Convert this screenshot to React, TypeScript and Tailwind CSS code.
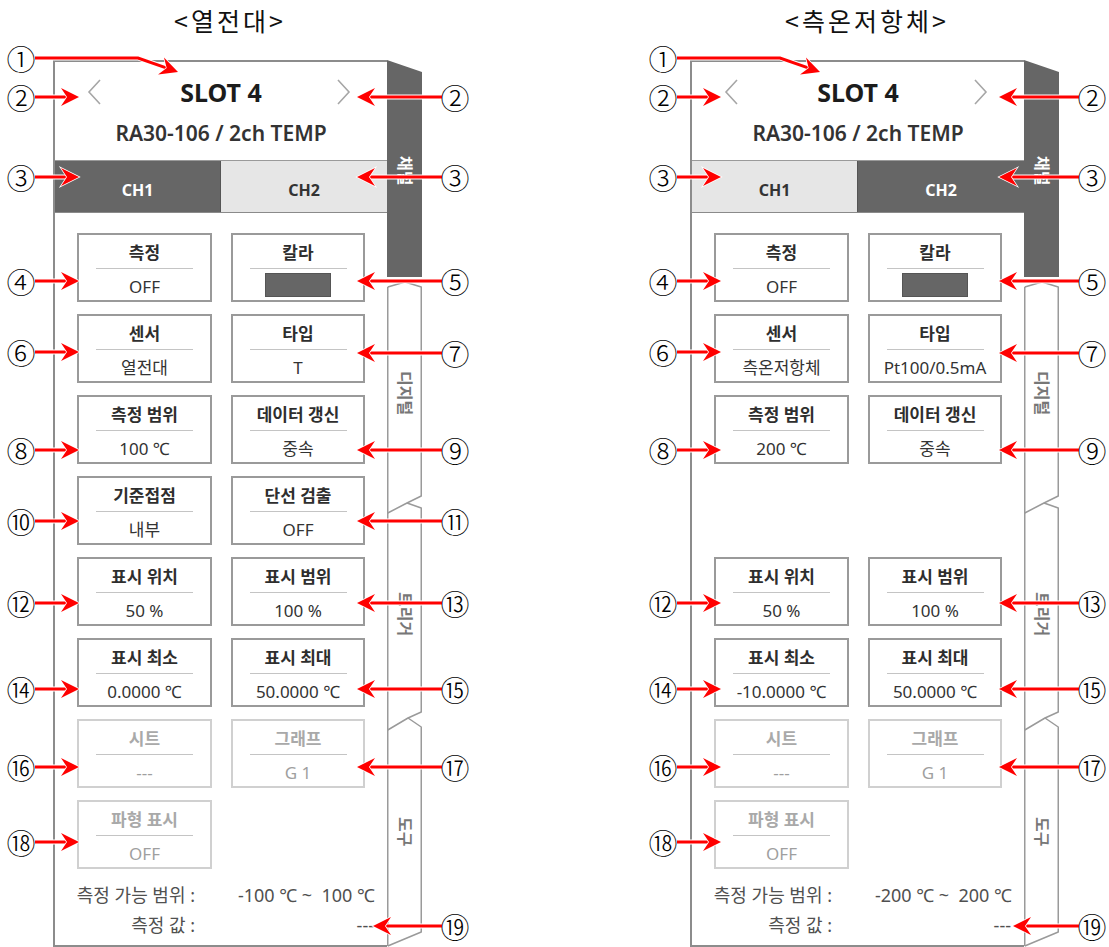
import React from "react"

type Cell = { label: string; value?: string; swatch?: boolean; disabled?: boolean } | null

type PanelData = {
  active: 1 | 2
  rows: [Cell, Cell][]
  range: string
}

const LEFT: PanelData = {
  active: 1,
  rows: [
    [{ label: "측정", value: "OFF" }, { label: "칼라", swatch: true }],
    [{ label: "센서", value: "열전대" }, { label: "타입", value: "T" }],
    [{ label: "측정 범위", value: "100 ℃" }, { label: "데이터 갱신", value: "중속" }],
    [{ label: "기준접점", value: "내부" }, { label: "단선 검출", value: "OFF" }],
    [{ label: "표시 위치", value: "50 %" }, { label: "표시 범위", value: "100 %" }],
    [{ label: "표시 최소", value: "0.0000 ℃" }, { label: "표시 최대", value: "50.0000 ℃" }],
    [{ label: "시트", value: "---", disabled: true }, { label: "그래프", value: "G 1", disabled: true }],
    [{ label: "파형 표시", value: "OFF", disabled: true }, null],
  ],
  range: "-100 ℃ ~  100 ℃",
}

const RIGHT: PanelData = {
  active: 2,
  rows: [
    [{ label: "측정", value: "OFF" }, { label: "칼라", swatch: true }],
    [{ label: "센서", value: "측온저항체" }, { label: "타입", value: "Pt100/0.5mA" }],
    [{ label: "측정 범위", value: "200 ℃" }, { label: "데이터 갱신", value: "중속" }],
    [null, null],
    [{ label: "표시 위치", value: "50 %" }, { label: "표시 범위", value: "100 %" }],
    [{ label: "표시 최소", value: "-10.0000 ℃" }, { label: "표시 최대", value: "50.0000 ℃" }],
    [{ label: "시트", value: "---", disabled: true }, { label: "그래프", value: "G 1", disabled: true }],
    [{ label: "파형 표시", value: "OFF", disabled: true }, null],
  ],
  range: "-200 ℃ ~  200 ℃",
}

const CIRCLED = "①②③④⑤⑥⑦⑧⑨⑩⑪⑫⑬⑭⑮⑯⑰⑱⑲"

function Chevron({ left }: { left?: boolean }) {
  return (
    <svg width="15" height="26" viewBox="0 0 15 26">
      <polyline
        points={left ? "13,1 2,13 13,25" : "2,1 13,13 2,25"}
        fill="none"
        stroke="#a6a6a6"
        strokeWidth="1.6"
      />
    </svg>
  )
}

function Button({ b }: { b: Cell }) {
  if (!b) return <div className="h-[69px]" />
  const dis = b.disabled
  return (
    <div
      className={`h-[69px] border-2 flex flex-col items-center ${dis ? "border-[#d0d0d0]" : "border-[#9a9a9a]"}`}
    >
      <div className={`pt-[6px] leading-[24px] text-[17px] font-bold ${dis ? "text-[#a9a9a9]" : "text-[#2e2e2e]"}`}>
        {b.label}
      </div>
      <div className="mt-[3px] w-[97px] h-px bg-[#c4c4c4]" />
      {b.swatch ? (
        <div className="mt-[4px] w-[66px] h-[24px] bg-[#666] border border-[#555]" />
      ) : (
        <div className={`mt-[6px] leading-[24px] text-[17px] ${dis ? "text-[#9f9f9f]" : "text-[#333]"}`}>
          {b.value}
        </div>
      )}
    </div>
  )
}

function Panel({ d }: { d: PanelData }) {
  return (
    <div className="w-[334px] h-[887px] border-l-2 border-t-2 border-b-2 border-[#8c8c8c] flex flex-col bg-white">
      <div className="h-[99px] border-b border-[#9a9a9a] shrink-0">
        <div className="mt-[15px] h-[30px] grid grid-cols-[1fr_auto_1fr] items-center">
          <div className="pl-[32px] flex">
            <Chevron left />
          </div>
          <span className="text-[25px] font-bold leading-[30px] text-[#1c1c1c]">SLOT 4</span>
          <div className="pr-[36px] flex justify-end">
            <Chevron />
          </div>
        </div>
        <div className="mt-[13px] text-center text-[21px] font-semibold leading-[26px] text-[#333]">
          RA30-106 / 2ch TEMP
        </div>
      </div>

      <div className="h-[52px] flex border-b border-[#8a8a8a] shrink-0">
        <div
          className={`w-[165px] flex items-center justify-center pt-[6px] text-[16px] font-bold ${d.active === 1 ? "bg-[#666] text-white" : "bg-[#e6e6e6] text-[#333]"}`}
        >
          CH1
        </div>
        <div
          className={`flex-1 flex items-center justify-center pt-[6px] text-[16px] font-bold border-l border-[#555] ${d.active === 2 ? "bg-[#666] text-white" : "bg-[#e6e6e6] text-[#333]"}`}
        >
          CH2
        </div>
      </div>

      <div className="pt-[20px] pl-[22px] grid grid-cols-[135px_134px] auto-rows-[69px] gap-x-[19px] gap-y-[12px]">
        {d.rows.map((r, i) => (
          <React.Fragment key={i}>
            <Button b={r[0]} />
            <Button b={r[1]} />
          </React.Fragment>
        ))}
      </div>

      <div className="mt-[11px] grid grid-cols-[140px_1fr] text-[18px] leading-[30px] text-[#505050]">
        <span className="text-right">측정 가능 범위 :</span>
        <span className="text-right pr-[12px] whitespace-pre">{d.range}</span>
        <span className="text-right">측정 값 :</span>
        <span className="text-right pr-[13px]">---</span>
      </div>
    </div>
  )
}

function Strip() {
  const tabs = [
    { label: "채널", h: "h-[222px]", dark: true },
    { label: "디지털", h: "h-[222px]" },
    { label: "트리거", h: "h-[220px]" },
    { label: "도구", h: "h-[216px]" },
  ]
  return (
    <div className="relative w-[36px] h-[887px]">
      <svg className="absolute left-0 top-0" width="36" height="887" viewBox="0 0 36 887">
        <polygon points="0,0 35,12 35,217 0,217" fill="#666" />
        <g fill="none" stroke="#9a9a9a" strokeWidth="1.5" strokeLinejoin="round">
          <path d="M0.75,227 V886" />
          <path d="M0.75,227 L18,222 L34.25,227 V436 L20,443" />
          <path d="M0.75,453 L20,443 L34.25,448 V652 L21,658" />
          <path d="M0.75,670 L21,658 L34.25,667 V872 L0.75,886" />
        </g>
      </svg>
      <div className="relative flex flex-col">
        {tabs.map((t) => (
          <div key={t.label} className={`${t.h} flex items-center justify-center`}>
            <span
              className={`[writing-mode:vertical-rl] [text-orientation:sideways] text-[16px] font-bold leading-none ${t.dark ? "text-white" : "text-[#777]"}`}
            >
              {t.label}
            </span>
          </div>
        ))}
      </div>
    </div>
  )
}

function Arrow({ pts }: { pts: [number, number][] }) {
  const [x1, y1] = pts[pts.length - 2]
  const [x2, y2] = pts[pts.length - 1]
  const a = Math.atan2(y2 - y1, x2 - x1)
  const end: [number, number] = [x2 - Math.cos(a) * 11, y2 - Math.sin(a) * 11]
  const line = [...pts.slice(0, -1), end].map((p) => p.join(",")).join(" ")
  return (
    <g>
      <polyline points={line} fill="none" stroke="#fff" strokeWidth="5" />
      <polyline points={line} fill="none" stroke="#f00" strokeWidth="3" />
      <polygon
        points="0,0 -18,-9 -12,0 -18,9"
        transform={`translate(${x2},${y2}) rotate(${(a * 180) / Math.PI})`}
        fill="#f00"
        stroke="#fff"
        strokeWidth="1.5"
        paintOrder="stroke"
      />
    </g>
  )
}

type Call = { n: number; cx: number; cy: number; pts: [number, number][] }

function callouts(s: number, rTip: number, endTip: number, skip: number[]): Call[] {
  const left = [2, 3, 4, 6, 8, 10, 12, 14, 16, 18]
  const leftY = [97, 177, 281, 352, 450, 521, 603, 689, 767, 842]
  const right = [2, 3, 5, 7, 9, 11, 13, 15, 17, 19]
  const rightY = [97, 177, 281, 353, 450, 521, 603, 689, 767, 926]
  const out: Call[] = [
    { n: 1, cx: 21 + s, cy: 58, pts: [[35 + s, 58], [138 + s, 58], [178 + s, 72]] },
  ]
  left.forEach((n, i) => {
    const y = leftY[i]
    out.push({ n, cx: 21 + s, cy: y, pts: [[35 + s, y], [79 + s, y]] })
  })
  right.forEach((n, i) => {
    const y = rightY[i]
    out.push({ n, cx: 455, cy: y, pts: [[442, y], [n === 19 ? endTip : rTip, y]] })
  })
  return out.filter((c) => !skip.includes(c.n))
}

function Figure({
  title,
  d,
  wide,
  shift,
  rTip,
  endTip,
  skip,
}: {
  title: string
  d: PanelData
  wide: boolean
  shift: number
  rTip: number
  endTip: number
  skip: number[]
}) {
  const calls = callouts(shift, rTip, endTip, skip)
  return (
    <div className={`relative shrink-0 h-[947px] ${wide ? "w-[637px]" : "w-[472px]"}`}>
      <div className="w-[460px] h-[60px] pt-[5px] text-center text-[25px] leading-[30px] tracking-[3px] text-[#111] [font-family:'Noto_Sans_CJK_KR',serif]">
        {title}
      </div>
      <div className="flex ml-[53px]">
        <Panel d={d} />
        <Strip />
      </div>
      <svg className="absolute left-0 top-0 pointer-events-none" width="472" height="947">
        {calls.map((c) => (
          <Arrow key={c.n + "-" + c.cx} pts={c.pts} />
        ))}
      </svg>
      {calls.map((c) => (
        <span
          key={"n" + c.n + "-" + c.cx}
          className="absolute -translate-x-1/2 -translate-y-1/2 text-[29px] font-light leading-none text-black [font-family:'Noto_Sans_CJK_KR',serif]"
          style={{ left: c.cx, top: c.cy }}
        >
          {CIRCLED[c.n - 1]}
        </span>
      ))}
    </div>
  )
}

export default function App() {
  return (
    <div className="w-[1109px] h-[947px] bg-white flex overflow-hidden [font-family:'Noto_Sans','Noto_Sans_CJK_KR',sans-serif]">
      <Figure title="<열전대>" d={LEFT} wide shift={0} rTip={357} endTip={373} skip={[]} />
      <Figure title="<측온저항체>" d={RIGHT} wide={false} shift={5} rTip={362} endTip={376} skip={[10, 11]} />
    </div>
  )
}
